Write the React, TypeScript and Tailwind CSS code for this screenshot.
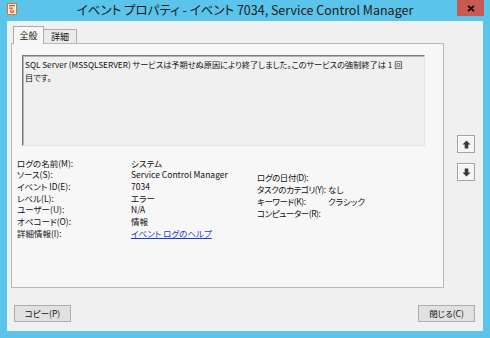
import React from "react";

function AppIcon() {
  return (
    <svg width="10" height="12" viewBox="0 0 10 12">
      <rect x="0.5" y="0.5" width="9" height="11" fill="#fbefd2" stroke="#c67a3c" />
      <rect x="2" y="2" width="6" height="1.2" fill="#d84a2a" />
      <rect x="2" y="4.5" width="4" height="1.2" fill="#d84a2a" />
      <circle cx="5" cy="8.3" r="2" fill="#e2572c" />
      <rect x="4.5" y="7" width="1" height="2" fill="#fff" />
    </svg>
  );
}

function ArrowBtn({ down }: { down?: boolean }) {
  return (
    <div className="w-[18px] h-[18px] border border-[#a3a3a3] bg-[#f4f4f4] flex items-center justify-center shadow-[inset_1px_1px_0_#ffffff]">
      <svg width="9" height="9" viewBox="0 0 9 9" className={down ? "rotate-180" : ""}>
        <polygon points="4.5,0.5 8.5,4.5 6.3,4.5 6.3,8.5 2.7,8.5 2.7,4.5 0.5,4.5" fill="#3a3a3a" />
      </svg>
    </div>
  );
}

export default function App() {
  const left: [string, React.ReactNode][] = [
    ["ログの名前(M):", "システム"],
    ["ソース(S):", "Service Control Manager"],
    ["イベント ID(E):", "7034"],
    ["レベル(L):", "エラー"],
    ["ユーザー(U):", "N/A"],
    ["オペコード(O):", "情報"],
    [
      "詳細情報(I):",
      <span className="text-[#1e3ccc] underline underline-offset-[1px]">イベント ログのヘルプ</span>,
    ],
  ];
  const right: [string, string][] = [
    ["ログの日付(D):", ""],
    ["タスクのカテゴリ(Y):", "なし"],
    ["キーワード(K):", "クラシック"],
    ["コンピューター(R):", ""],
  ];

  return (
    <div className="w-[490px] h-[338px] bg-[#5bc4ea] flex flex-col overflow-hidden font-['Noto_Sans_CJK_JP',sans-serif] [font-feature-settings:'palt'] text-[#111]">
      {/* Title bar */}
      <div className="h-[21px] flex items-start shrink-0">
        <div className="w-[40px] pl-[7px] pt-[3px]">
          <AppIcon />
        </div>
        <div className="flex-1 text-center text-[12.5px] leading-[20px] text-[#1b1b1b]">
          イベント プロパティ - イベント 7034, Service Control Manager
        </div>
        <div className="w-[40px] flex justify-end pr-[6px]">
          <div className="w-[27px] h-[16px] bg-[#c75a52] flex items-center justify-center">
            <svg width="8" height="7" viewBox="0 0 8 7">
              <path d="M1 0.8 L7 6.2 M7 0.8 L1 6.2" stroke="#1a0606" strokeWidth="1.8" />
            </svg>
          </div>
        </div>
      </div>

      {/* Client area */}
      <div className="mx-[7px] mb-[7px] flex-1 bg-[#f0f0f0] flex flex-col pt-[5px] pl-[4px] pr-[8px] pb-[9px] text-[8.5px]">
        <div className="flex flex-1 min-h-0">
          <div className="w-[433px] flex flex-col">
            {/* Tabs */}
            <div className="flex items-end h-[17px] pl-[2px]">
              <div className="relative z-10 w-[31px] h-[18px] -mb-[1px] border border-b-0 border-[#acacac] bg-[#f7f7f7] flex items-center justify-center text-[9px] leading-none">
                全般
              </div>
              <div className="w-[33px] h-[14px] border border-l-0 border-b-0 border-[#acacac] bg-[#ebebeb] flex items-center justify-center text-[9px] leading-none">
                詳細
              </div>
            </div>
            {/* Panel */}
            <div className="flex-1 border border-[#b9b9b9] bg-[#f7f7f7] pt-[11px] pl-[10px] flex flex-col">
              <div className="w-[403px] h-[91px] border-t border-l border-[#7a7a7a] border-r border-b border-r-[#e6e6e6] border-b-[#e6e6e6] bg-[#f0f0f0] shadow-[inset_1px_1px_0_#b4b4b4] pt-[2px] pl-[2px] leading-[12.5px] text-[8.2px] whitespace-nowrap overflow-hidden">
                SQL Server (MSSQLSERVER) サービスは予期せぬ原因により終了しました。このサービスの強制終了は 1 回
                <br />
                目です。
              </div>
              <div className="flex mt-[11px] -ml-[5px]">
                <div className="grid grid-cols-[114px_126px] auto-rows-[11.67px] items-center leading-none">
                  {left.map(([k, v], i) => (
                    <React.Fragment key={i}>
                      <div className="whitespace-nowrap">{k}</div>
                      <div className="whitespace-nowrap">{v}</div>
                    </React.Fragment>
                  ))}
                </div>
                <div className="grid grid-cols-[71px_auto] auto-rows-[12px] items-center leading-none mt-[14px] h-fit">
                  {right.map(([k, v], i) => (
                    <React.Fragment key={i}>
                      <div className="whitespace-nowrap tracking-[-0.45px]">{k}</div>
                      <div className="whitespace-nowrap">{v}</div>
                    </React.Fragment>
                  ))}
                </div>
              </div>
            </div>
          </div>
          <div className="flex-1 flex flex-col items-end pt-[109px] gap-[10px]">
            <ArrowBtn />
            <ArrowBtn down />
          </div>
        </div>
        {/* Buttons */}
        <div className="flex justify-between mt-[17px] pl-[3px] shrink-0">
          <div className="w-[57px] h-[17px] border border-[#adadad] bg-[#e1e1e1] flex items-center justify-center leading-none">
            コピー(P)
          </div>
          <div className="w-[57px] h-[17px] border border-[#adadad] bg-[#e1e1e1] flex items-center justify-center leading-none">
            閉じる(C)
          </div>
        </div>
      </div>
    </div>
  );
}
